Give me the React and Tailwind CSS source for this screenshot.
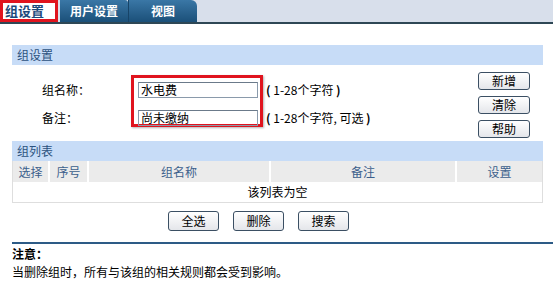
import React from 'react';

const FONT = { fontFamily: '"Noto Sans CJK SC", "Noto Sans", sans-serif' };

const Btn = ({ children, className = '' }) => (
  <button
    className={`h-[18px] w-[51px] rounded-[3px] border border-[#3b4f63] bg-gradient-to-b from-white to-[#e4e6ea] text-[12px] leading-none text-black ${className}`}
  >
    {children}
  </button>
);

const SectionHeader = ({ children }) => (
  <div className="flex h-[20px] items-center bg-[#c7dcf7] px-[5px] text-[12px] text-[#2c527e]">{children}</div>
);

const App = () => {
  return (
    <div className="h-[281px] w-[553px] overflow-hidden bg-white" style={FONT}>
      {/* tab bar */}
      <div className="flex h-[24px] items-stretch border-b-2 border-[#2e4755] bg-[#d8dfeb]">
        <div className="flex w-[58px] items-center border-[3px] border-[#e0141e] bg-white pl-[2px] text-[13px] font-bold text-[#1c4a7c]">
          组设置
        </div>
        <div className="ml-[2px] flex w-[68px] items-center justify-center rounded-tr-[3px] bg-gradient-to-b from-[#3a77a6] to-[#1b5079] text-[12px] font-bold text-white">
          用户设置
        </div>
        <div className="flex w-[69px] items-center justify-center rounded-tr-[6px] border-l border-[#174468] bg-gradient-to-b from-[#3a77a6] to-[#1b5079] text-[12px] font-bold text-white">
          视图
        </div>
      </div>

      <div className="mx-[12px] mt-[21px] w-[531px]">
        <SectionHeader>组设置</SectionHeader>

        {/* form */}
        <div className="flex h-[76px] items-start pt-[7px]">
          <div className="mt-[3px] flex w-[119px] flex-col gap-[12px] pl-[30px] pt-[7px] text-[12px] text-black">
            <div className="flex h-[16px] items-center">组名称：</div>
            <div className="flex h-[16px] items-center">备注：</div>
          </div>
          <div className="mt-[3px] flex h-[52px] w-[132px] flex-col gap-[12px] border-[3px] border-[#e0141e] pl-[4px] pt-[4px] shadow-[1px_1px_2px_rgba(0,0,0,0.3)]">
            <div className="flex h-[16px] w-[120px] items-center border border-[#8a9aab] border-t-[#6b7a8a] px-[2px] text-[12px] text-black">
              水电费
            </div>
            <div className="flex h-[16px] w-[120px] items-center border border-[#8a9aab] border-t-[#6b7a8a] px-[2px] text-[12px] text-black">
              尚未缴纳
            </div>
          </div>
          <div className="mt-[3px] flex flex-col gap-[12px] pl-[3px] pt-[7px] text-[12px] text-black">
            <div className="flex h-[16px] items-center">
              <span className="font-bold">(</span>&nbsp;1-28个字符&nbsp;<span className="font-bold">)</span>
            </div>
            <div className="flex h-[16px] items-center">
              <span className="font-bold">(</span>&nbsp;1-28个字符,&nbsp;可选&nbsp;<span className="font-bold">)</span>
            </div>
          </div>
          <div className="ml-auto mr-[13px] flex flex-col gap-[6px]">
            <Btn className="h-[17px] w-[52px]">新增</Btn>
            <Btn className="h-[17px] w-[52px]">清除</Btn>
            <Btn className="h-[17px] w-[52px]">帮助</Btn>
          </div>
        </div>

        <SectionHeader>组列表</SectionHeader>
        <div className="border border-t-0 border-[#dedede]">
          <div className="flex h-[21px] items-stretch bg-[#ebebeb] text-[12px] text-[#3c5f8c]">
            <div className="flex w-[37px] items-center justify-center border-r-2 border-white">选择</div>
            <div className="flex w-[39px] items-center justify-center border-r-2 border-white">序号</div>
            <div className="flex w-[182px] items-center justify-center border-r-2 border-white">组名称</div>
            <div className="flex w-[186px] items-center justify-center border-r-2 border-white">备注</div>
            <div className="flex flex-1 items-center justify-center">设置</div>
          </div>
          <div className="flex h-[20px] items-center justify-center text-[12px] text-black">该列表为空</div>
        </div>
      </div>

      <div className="mt-[8px] flex gap-[14px] pl-[168px]">
        <Btn className="h-[20px] w-[50px]">全选</Btn>
        <Btn className="h-[20px] w-[50px]">删除</Btn>
        <Btn className="h-[20px] w-[50px]">搜索</Btn>
      </div>

      <div className="ml-[12px] mt-[11px] border-t-2 border-[#2d5b86] pt-[1px] text-[12px] text-black">
        <div className="font-bold leading-[18px]">注意：</div>
        <div className="leading-[18px]">当删除组时，所有与该组的相关规则都会受到影响。</div>
      </div>
    </div>
  );
};

export default App;
